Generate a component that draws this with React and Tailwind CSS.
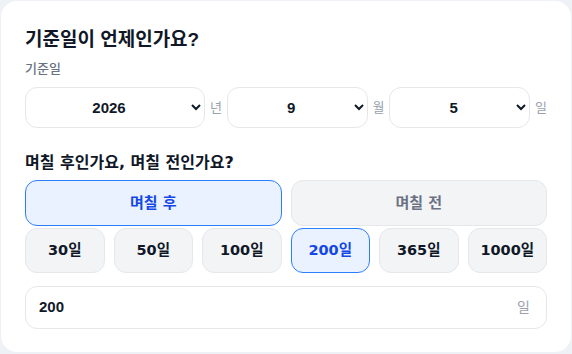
import React, { useState } from "react";

const KR = { fontFamily: '"Liberation Sans", "Noto Sans CJK KR", sans-serif' };
const DJ = { fontFamily: '"DejaVu Sans", "Noto Sans CJK KR", sans-serif' };

const years = [2024, 2025, 2026, 2027, 2028];
const months = Array.from({ length: 12 }, (_, i) => i + 1);
const days = Array.from({ length: 31 }, (_, i) => i + 1);
const presets = [30, 50, 100, 200, 365, 1000];

const DateSelect = ({ value, options, onChange, className = "" }) => (
  <select
    value={value}
    onChange={(e) => onChange(Number(e.target.value))}
    className={`h-[41px] rounded-xl border border-gray-200 bg-white px-3 text-center text-[15px] font-bold text-gray-900 [text-align-last:center] ${className}`}
    style={KR}
  >
    {options.map((o) => (
      <option key={o} value={o}>
        {o}
      </option>
    ))}
  </select>
);

export default function App() {
  const [year, setYear] = useState(2026);
  const [month, setMonth] = useState(9);
  const [day, setDay] = useState(5);
  const [after, setAfter] = useState(true);
  const [count, setCount] = useState(200);

  return (
    <div className="h-[354px] w-[572px] bg-[#eef2f7] p-px" style={KR}>
      <div className="h-[351px] rounded-2xl bg-white px-6 pt-[25px]">
        {/* Title */}
        <h1 className="text-[19px] font-bold leading-[28px] text-gray-900">
          기준일이 언제인가요?
        </h1>
        <div className="mt-[6px] text-[13px] font-medium leading-[18px] text-gray-500">기준일</div>

        {/* Date selects */}
        <div className="mt-[9px] flex items-center gap-[5px]">
          <DateSelect value={year} options={years} onChange={setYear} className="w-[180px]" />
          <span className="text-[13px] text-gray-400">년</span>
          <DateSelect value={month} options={months} onChange={setMonth} className="min-w-0 flex-1" />
          <span className="text-[13px] text-gray-400">월</span>
          <DateSelect value={day} options={days} onChange={setDay} className="min-w-0 flex-1" />
          <span className="text-[13px] text-gray-400">일</span>
        </div>

        {/* Direction */}
        <h2 className="mt-[24px] text-[16px] font-bold leading-[22px] text-gray-900" style={DJ}>
          며칠 후인가요, 며칠 전인가요?
        </h2>
        <div className="mt-[6px] grid grid-cols-2 gap-[9px]" style={DJ}>
          <button
            onClick={() => setAfter(true)}
            className={`h-[46px] rounded-xl border text-[15px] font-bold ${
              after
                ? "border-blue-500 bg-[#eaf2ff] text-blue-700"
                : "border-gray-200 bg-gray-100 text-gray-500"
            }`}
          >
            며칠 후
          </button>
          <button
            onClick={() => setAfter(false)}
            className={`h-[46px] rounded-xl border text-[15px] font-bold ${
              !after
                ? "border-blue-500 bg-[#eaf2ff] text-blue-700"
                : "border-gray-200 bg-gray-100 text-gray-500"
            }`}
          >
            며칠 전
          </button>
        </div>

        {/* Presets */}
        <div className="mt-[2px] grid grid-cols-6 gap-[9px]" style={DJ}>
          {presets.map((p) => (
            <button
              key={p}
              onClick={() => setCount(p)}
              className={`h-[45px] rounded-xl border text-[14.5px] font-bold ${
                count === p
                  ? "border-blue-500 bg-[#eaf2ff] text-blue-700"
                  : "border-gray-200 bg-gray-100 text-gray-900"
              }`}
            >
              {p}일
            </button>
          ))}
        </div>

        {/* Count input */}
        <div className="mt-[13px] flex h-[43px] items-center rounded-xl border border-gray-200 bg-white pl-[13px] pr-4">
          <input
            value={count}
            onChange={(e) => setCount(Number(e.target.value.replace(/\D/g, "")) || 0)}
            className="min-w-0 flex-1 text-[15px] font-bold text-gray-900 outline-none"
            style={KR}
          />
          <span className="text-[14px] text-gray-400">일</span>
        </div>
      </div>
    </div>
  );
}
